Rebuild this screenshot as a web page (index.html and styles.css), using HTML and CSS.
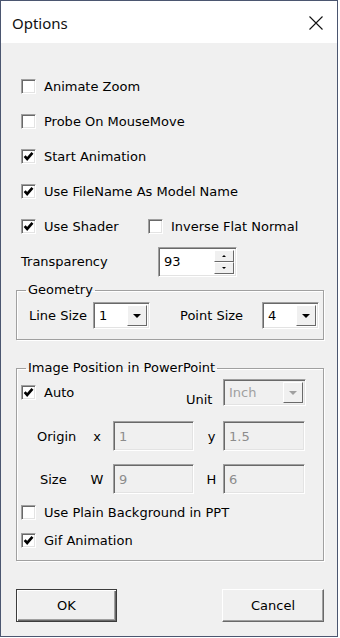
FILE: index.html
```html
<!DOCTYPE html>
<html lang="en">
<head>
    <meta charset="UTF-8" />
    <meta name="viewport" content="width=device-width, initial-scale=1.0" />
    <title>Options</title>
    <link rel="stylesheet" href="styles.css">
</head>
<body>
<div class="window">
    <div class="titlebar">
        <span class="title">Options</span>
        <span class="close">
            <svg width="14" height="14" viewBox="0 0 14 14"><path d="M0.5 0.5 L13.5 13.5 M13.5 0.5 L0.5 13.5" stroke="#111" stroke-width="1.1" fill="none"/></svg>
        </span>
    </div>

    <div class="content">
        <div class="row">
            <label class="check"><span class="box"></span>Animate Zoom</label>
        </div>
        <div class="row">
            <label class="check"><span class="box"></span>Probe On MouseMove</label>
        </div>
        <div class="row">
            <label class="check"><span class="box checked"><svg viewBox="0 0 10 10"><path d="M1.5 4.6 L3.8 7.2 L8.6 1.8"/></svg></span>Start Animation</label>
        </div>
        <div class="row">
            <label class="check"><span class="box checked"><svg viewBox="0 0 10 10"><path d="M1.5 4.6 L3.8 7.2 L8.6 1.8"/></svg></span>Use FileName As Model Name</label>
        </div>
        <div class="row">
            <label class="check shader"><span class="box checked"><svg viewBox="0 0 10 10"><path d="M1.5 4.6 L3.8 7.2 L8.6 1.8"/></svg></span>Use Shader</label>
            <label class="check"><span class="box"></span>Inverse Flat Normal</label>
        </div>
        <div class="row">
            <span class="transp-label">Transparency</span>
            <div class="spin">
                <span class="val">93</span>
                <span class="spin-btns">
                    <span class="spin-btn"><i class="tri-up"></i></span>
                    <span class="spin-btn"><i class="tri-down"></i></span>
                </span>
            </div>
        </div>

        <fieldset class="group geometry">
            <legend>Geometry</legend>
            <div class="geo-row">
                <span class="geo-label">Line Size</span>
                <div class="combo small">
                    <span class="val">1</span>
                    <span class="drop"><i class="arrow"></i></span>
                </div>
                <span class="geo-label point">Point Size</span>
                <div class="combo small">
                    <span class="val">4</span>
                    <span class="drop"><i class="arrow"></i></span>
                </div>
            </div>
        </fieldset>

        <fieldset class="group image">
            <legend>Image Position in PowerPoint</legend>
            <div class="img-row first">
                <label class="check auto"><span class="box checked"><svg viewBox="0 0 10 10"><path d="M1.5 4.6 L3.8 7.2 L8.6 1.8"/></svg></span>Auto</label>
                <span class="unit-label">Unit</span>
                <div class="combo unit disabled">
                    <span class="val">Inch</span>
                    <span class="drop"><i class="arrow"></i></span>
                </div>
            </div>
            <div class="img-row coords">
                <span class="coord-label">Origin</span>
                <span class="axis">x</span>
                <span class="edit">1</span>
                <span class="axis second">y</span>
                <span class="edit wide">1.5</span>
            </div>
            <div class="img-row coords size">
                <span class="coord-label">Size</span>
                <span class="axis">W</span>
                <span class="edit">9</span>
                <span class="axis second">H</span>
                <span class="edit wide">6</span>
            </div>
            <div class="img-row opt">
                <label class="check"><span class="box"></span>Use Plain Background in PPT</label>
            </div>
            <div class="img-row opt">
                <label class="check"><span class="box checked"><svg viewBox="0 0 10 10"><path d="M1.5 4.6 L3.8 7.2 L8.6 1.8"/></svg></span>Gif Animation</label>
            </div>
        </fieldset>

        <div class="buttons">
            <button class="btn default">OK</button>
            <button class="btn cancel">Cancel</button>
        </div>
    </div>
</div>
</body>
</html>
```

FILE: styles.css
```css
html, body {
  margin: 0;
  padding: 0;
  background: #fff;
}
body {
  font-family: "DejaVu Sans", Verdana, sans-serif;
  font-size: 13px;
  color: #000;
}
.window {
  width: 336px;
  height: 635px;
  border: 1px solid #4b5670;
  background: #f0f0f0;
}
.titlebar {
  height: 42px;
  background: #fff;
  display: flex;
  align-items: center;
  justify-content: space-between;
  padding: 0 14px 0 11px;
}
.title {
  font-family: "Noto Sans", "Open Sans", sans-serif;
  font-size: 15px;
  color: #111;
  margin-top: 1px;
}
.close {
  display: flex;
  margin-top: 2px;
}
.content {
  padding: 26px 13px 0 15px;
}
.row {
  height: 35px;
  display: flex;
  align-items: center;
  padding-left: 5px;
}
.check {
  display: flex;
  align-items: center;
  gap: 8px;
  white-space: nowrap;
}
.box {
  width: 11px;
  height: 11px;
  background: #fff;
  border: 1px solid;
  border-color: #a0a0a0 #fff #fff #a0a0a0;
  box-shadow: inset 1px 1px 0 #696969, inset -1px -1px 0 #e3e3e3;
  padding: 1px;
  display: flex;
}
.box svg {
  width: 11px;
  height: 11px;
}
.box path {
  fill: none;
  stroke: #000;
  stroke-width: 2.4;
}
.shader {
  width: 127px;
}
.transp-label {
  width: 137px;
}

/* champs 3D enfoncés */
.spin, .combo, .edit {
  box-sizing: border-box;
  border: 1px solid;
  border-color: #a0a0a0 #fff #fff #a0a0a0;
  box-shadow: inset 1px 1px 0 #696969, inset -1px -1px 0 #e3e3e3;
  display: flex;
  align-items: center;
}
.spin {
  width: 79px;
  height: 30px;
  background: #fff;
  padding: 2px;
}
.spin .val {
  flex: 1;
  padding-left: 3px;
}
.spin-btns {
  width: 20px;
  height: 100%;
  display: flex;
  flex-direction: column;
}
.spin-btn {
  flex: 1;
  background: #f0f0f0;
  border: 1px solid;
  border-color: #fff #696969 #696969 #fff;
  display: flex;
  align-items: center;
  justify-content: center;
}
.tri-up, .tri-down {
  width: 0;
  height: 0;
  border-left: 2px solid transparent;
  border-right: 2px solid transparent;
}
.tri-up {
  border-bottom: 2px solid #000;
}
.tri-down {
  border-top: 2px solid #000;
}

.group {
  margin: 0;
  padding: 0;
  border: 1px solid #a0a0a0;
  box-shadow: 1px 1px 0 #fff, inset 1px 1px 0 #fff;
}
.group legend {
  margin-left: 9px;
  padding: 0 2px;
  line-height: 16px;
}
.geometry {
  margin-top: 3px;
  padding-bottom: 10px;
}
.geo-row {
  display: flex;
  align-items: center;
  margin-top: 4px;
  padding-left: 12px;
}
.geo-label {
  width: 64px;
}
.geo-label.point {
  width: 82px;
  margin-left: 30px;
}
.combo {
  height: 27px;
  background: #fff;
  padding: 2px;
}
.combo.small {
  width: 57px;
}
.combo .val {
  flex: 1;
  padding-left: 3px;
}
.combo .drop {
  width: 20px;
  height: 100%;
  box-sizing: border-box;
  background: #f0f0f0;
  border: 1px solid;
  border-color: #fff #696969 #696969 #fff;
  display: flex;
  align-items: center;
  justify-content: center;
}
.arrow {
  width: 0;
  height: 0;
  border-left: 4px solid transparent;
  border-right: 4px solid transparent;
  border-top: 4px solid #000;
}
.combo.disabled {
  background: #f0f0f0;
  color: #a0a0a0;
}
.combo.disabled .arrow {
  border-top-color: #a0a0a0;
}

.image {
  margin-top: 20px;
  padding-bottom: 6px;
}
.img-row {
  display: flex;
  align-items: center;
  padding-left: 4px;
}
.img-row.first {
  margin-top: 3px;
  height: 27px;
}
.auto {
  width: 165px;
}
.unit-label {
  width: 37px;
  align-self: flex-end;
  margin-bottom: -1px;
}
.combo.unit {
  width: 83px;
}
.coords {
  margin-top: 15px;
  height: 30px;
  padding-left: 20px;
}
.coords.size {
  margin-top: 13px;
}
.coord-label {
  width: 50px;
}
.size .coord-label {
  width: 47px;
  padding-left: 3px;
}
.axis {
  width: 20px;
  text-align: center;
}
.axis.second {
  width: 19px;
  margin-left: 8px;
}
.edit {
  width: 81px;
  height: 30px;
  margin-left: 6px;
  padding-left: 5px;
  color: #8c8c8c;
  background: #f0f0f0;
}
.edit.wide {
  width: 82px;
  margin-left: 2px;
}
.opt {
  height: 28px;
}
.coords.size + .opt {
  margin-top: 4px;
}

.buttons {
  display: flex;
  justify-content: space-between;
  margin-top: 28px;
}
.btn {
  font-family: "DejaVu Sans", Verdana, sans-serif;
  font-size: 13px;
  color: #000;
  height: 33px;
  background: #f0f0f0;
  border: 1px solid;
  border-color: #fff #696969 #696969 #fff;
  box-shadow: inset -1px -1px 0 #a0a0a0;
  padding: 0;
}
.btn.default {
  width: 101px;
  border-color: #3c3c3c;
  box-shadow: inset 1px 1px 0 #fff, inset -1px -1px 0 #696969, inset -2px -2px 0 #a0a0a0;
}
.btn.cancel {
  width: 102px;
}
```
